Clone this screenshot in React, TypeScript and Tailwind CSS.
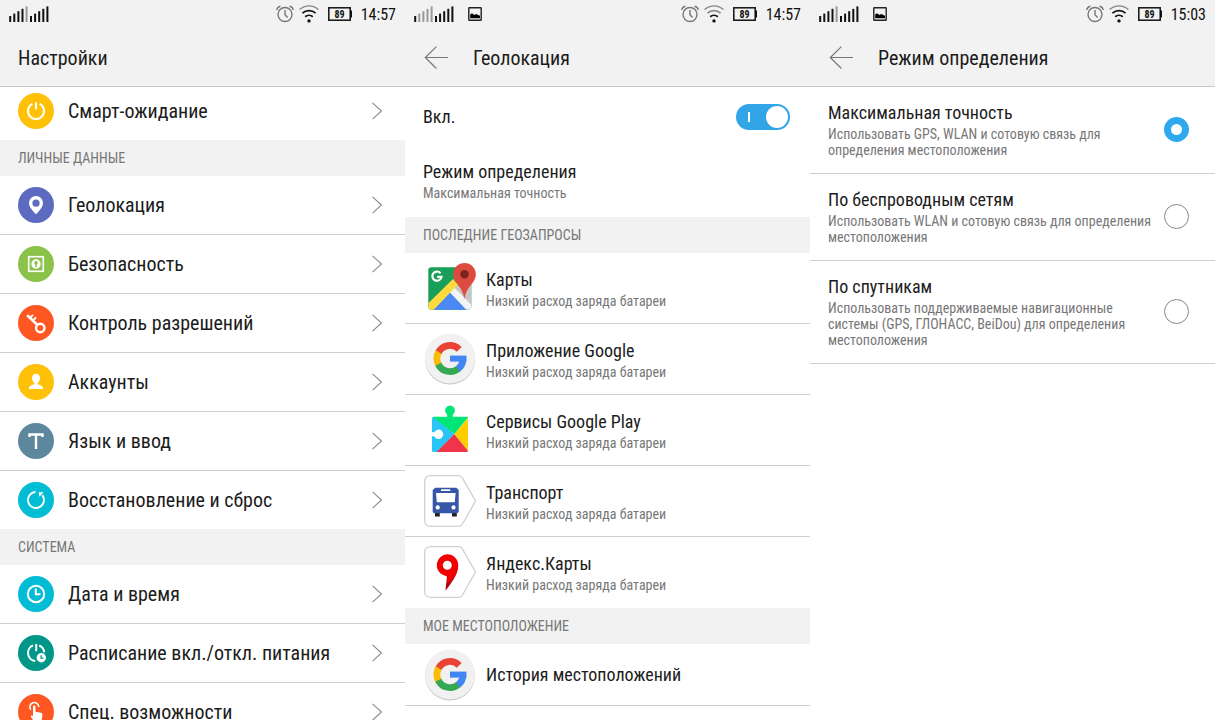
import type { ReactNode } from 'react';

type Signal = 'full' | 'weak';

const SIGNAL_BARS: Record<Signal, string[]> = {
  full: ['#111', '#111', '#111', '#111', '#999', '#111', '#111', '#111', '#111', '#111'],
  weak: ['#111', '#999', '#999', '#999', '#999', '#111', '#111', '#111', '#111', '#111'],
};

function StatusBar({ time, signal = 'full', picture = false }: { time: string; signal?: Signal; picture?: boolean }) {
  return (
    <div className="flex h-[30px] items-center justify-between px-[9px]">
      <div className="flex items-center gap-[14px] pb-0.5">
        <svg width="40" height="16" viewBox="0 0 40 16" aria-hidden>
          {SIGNAL_BARS[signal].map((fill, i) => {
            const step = i % 5;
            const h = 6 + step * 2.4;
            const x = (i < 5 ? 0.2 : 21) + step * 4.1;
            return <rect key={i} x={x} y={16 - h} width="2" height={h} fill={fill} />;
          })}
        </svg>
        {picture && (
          <svg width="14" height="14" viewBox="0 0 14 14" aria-hidden>
            <rect x="0.8" y="0.8" width="12.4" height="12.4" rx="0.5" fill="none" stroke="#222" strokeWidth="1.4" />
            <path d="M2.2 11.2V7.6l1.8-1.4 2.4 1.9 1.8-1 3.8 1.7v2.4z" fill="#000" />
          </svg>
        )}
      </div>
      <div className="flex items-center">
        <div className="flex items-center pb-0.5">
          <svg width="18" height="18" viewBox="0 0 18 18" fill="none" stroke="#777" strokeWidth="1.4" aria-hidden>
            <circle cx="9" cy="9.5" r="7" />
            <path d="M9 5v4.8l2.6 2.6M.8 5C1 3.200 2.400 1.600 4.400 1.200M17.200 5c-.2-1.800-1.600-3.400-3.600-3.800" />
          </svg>
          <svg className="ml-[5px]" width="20" height="18" viewBox="0 0 20 18" fill="none" aria-hidden>
            <path d="M.6 4.600a13.600 13.600 0 0 1 18.800 0" stroke="#888" strokeWidth="1.4" />
            <path d="M3.400 8.200a9.800 9.800 0 0 1 13.200 0" stroke={signal === 'weak' ? '#888' : '#111'} strokeWidth="1.8" />
            <path d="M6.200 11.800a5.800 5.800 0 0 1 7.600 0" stroke="#111" strokeWidth="1.8" />
            <circle cx="10" cy="15.900" r="1.7" fill="#111" />
          </svg>
          <svg className="ml-[9px]" width="24" height="14" viewBox="0 0 24 14" aria-hidden>
            <rect x="0.8" y="0.8" width="21.400" height="12.400" fill="none" stroke="#111" strokeWidth="1.5" />
            <path d="M22 3.500h2v7h-2z" fill="#111" />
            <text x="11.500" y="10.800" textAnchor="middle" className="text-[10px] font-bold" fill="#111">
              89
            </text>
          </svg>
        </div>
        <span className="ml-[9px] text-[16px] leading-none text-[#111]">{time}</span>
      </div>
    </div>
  );
}

function TopBar({ title, back = false, ...status }: { title: string; back?: boolean; time: string; signal?: Signal; picture?: boolean }) {
  return (
    <header className="border-b border-[#c8c8c8] bg-[#f2f2f2]">
      <StatusBar {...status} />
      <div className="flex h-[56px] items-center gap-[22px] px-[18px]">
        {back && (
          <button type="button" aria-label="Назад" className="w-7">
            <svg width="28" height="24" viewBox="0 0 28 24" fill="none" stroke="#777" strokeWidth="1.2" aria-hidden>
              <path d="M25 11.500H2.300M13.400.6 2.300 11.500l11.100 11" />
            </svg>
          </button>
        )}
        <h1 className="text-[20px] leading-6 text-[#1c1c1c]">{title}</h1>
      </div>
    </header>
  );
}

function SectionTitle({ children }: { children: ReactNode }) {
  return <h2 className="flex h-9 items-center bg-[#f2f2f2] px-[18px] text-[14px] text-[#777]">{children}</h2>;
}

function MenuRow({ icon, color, label }: { icon: ReactNode; color: string; label: string }) {
  return (
    <a href="#" className="flex h-[58px] w-full items-center pr-[22px] pl-[18px]">
      <svg width="36" height="36" viewBox="0 0 36 36" fill="none" stroke="#fff" strokeWidth="2" className="shrink-0" aria-hidden>
        <circle cx="18" cy="18" r="18" fill={color} stroke="none" />
        {icon}
      </svg>
      <span className="ml-[14px] flex-1 text-[20px] leading-6 text-[#1c1c1c]">{label}</span>
      <svg width="12" height="18" viewBox="0 0 12 18" fill="none" stroke="#888" strokeWidth="1.1" aria-hidden>
        <path d="M1.500.8 10.500 9l-9 8.200" />
      </svg>
    </a>
  );
}

const PERSONAL = [
  {
    label: 'Геолокация',
    color: '#5c6bc0',
    icon: <path d="M18 9a7 7 0 0 0-7 7c0 5 7 11.400 7 11.400S25 21 25 16a7 7 0 0 0-7-7zm0 3.600a3.600 3.600 0 1 1 0 7.200 3.600 3.600 0 0 1 0-7.200z" fill="#fff" stroke="none" />,
  },
  {
    label: 'Безопасность',
    color: '#8bc34a',
    icon: (
      <>
        <rect x="10.700" y="10.700" width="14.600" height="14.600" strokeWidth="1.6" />
        <circle cx="18" cy="18" r="4.700" fill="#fff" stroke="none" />
        <path d="M18 15a1.800 1.800 0 0 0-.8 3.400V21h1.600v-2.600A1.800 1.800 0 0 0 18 15z" fill="#8bc34a" stroke="none" />
      </>
    ),
  },
  {
    label: 'Контроль разрешений',
    color: '#ff5722',
    icon: (
      <>
        <circle cx="22.300" cy="23" r="4.200" strokeWidth="2.4" />
        <path d="M19.200 19.800 9.200 10.200" strokeWidth="2.6" />
        <path d="m12 12.900 3-3M14.800 15.600l3.200-3.200" strokeWidth="2" />
      </>
    ),
  },
  {
    label: 'Аккаунты',
    color: '#ffc107',
    icon: <path d="M18 9.800c-2.500 0-4 1.800-4 4.200 0 2 .8 3.800 2.200 4.700v1.500c-1.900.7-5.200 1.500-5.200 4V25h14v-.8c0-2.500-3.300-3.300-5.200-4v-1.500c1.400-.9 2.200-2.700 2.200-4.700 0-2.400-1.500-4.200-4-4.200z" fill="#fff" stroke="none" />,
  },
  {
    label: 'Язык и ввод',
    color: '#5c879c',
    icon: <path d="M11.500 14v-2.500h13V14M18 11.500v14.500" strokeWidth="2.400" />,
  },
  {
    label: 'Восстановление и сброс',
    color: '#00bcd4',
    icon: (
      <>
        <path d="M17.500 10a8 8 0 1 0 6.800 3.100" strokeWidth="1.8" />
        <path d="M20.600 10.200h5l-4.200 4.500z" fill="#fff" stroke="none" />
      </>
    ),
  },
];

const SYSTEM = [
  {
    label: 'Дата и время',
    color: '#00bcd4',
    icon: (
      <>
        <circle cx="18" cy="18" r="8.200" />
        <path d="M17.800 12.500v5.700h4.600" />
      </>
    ),
  },
  {
    label: 'Расписание вкл./откл. питания',
    color: '#009688',
    icon: (
      <>
        <path d="M15 10.400a8.200 8.200 0 0 0 2.300 15.700M21.200 10.500a8.200 8.200 0 0 1 5 6.800" />
        <path d="M18.200 9v7.200" />
        <circle cx="23.300" cy="22.800" r="4.700" fill="#fff" stroke="none" />
        <path d="M23.100 20.300v2.900h2.400" stroke="#009688" strokeWidth="1.300" />
      </>
    ),
  },
  {
    label: 'Спец. возможности',
    color: '#ff5722',
    icon: (
      <>
        <path d="M12.800 15.800a4.500 4.500 0 1 1 8-2.800" strokeWidth="1.600" />
        <path d="M15 12.800c0-1.700 2.500-1.700 2.500 0v5l5.400 1c1.200.3 1.600 1 1.500 2.100L23.700 26l-1 3.200h-5.800L13 22.900c-.7-1.200.8-2.200 2-.9z" fill="#fff" stroke="none" />
      </>
    ),
  },
];

function SettingsScreen() {
  return (
    <section className="min-w-0">
      <TopBar title="Настройки" time="14:57" />
      {/* first row is partly scrolled under the header */}
      <div className="flex h-[53px] items-end overflow-hidden">
        <MenuRow
          label="Смарт-ожидание"
          color="#ffc107"
          icon={
            <>
              <path d="M14.300 10.900a8 8 0 1 0 7.400 0" />
              <path d="M18 9.200v7" />
            </>
          }
        />
      </div>
      <SectionTitle>ЛИЧНЫЕ ДАННЫЕ</SectionTitle>
      <ul className="divide-y divide-[#cfcfcf]">
        {PERSONAL.map((item) => (
          <li key={item.label}>
            <MenuRow {...item} />
          </li>
        ))}
      </ul>
      <SectionTitle>СИСТЕМА</SectionTitle>
      <ul className="divide-y divide-[#cfcfcf]">
        {SYSTEM.map((item) => (
          <li key={item.label}>
            <MenuRow {...item} />
          </li>
        ))}
      </ul>
    </section>
  );
}

function AppIcon({ children }: { children: ReactNode }) {
  return (
    <svg width="53" height="52" viewBox="-1 0 53 52" fill="none" className="shrink-0" aria-hidden>
      {children}
    </svg>
  );
}

function MapsIcon() {
  return (
    <AppIcon>
      <defs>
        <clipPath id="maps-tile">
          <rect x="4.300" y="5.300" width="43" height="42.500" rx="3" />
        </clipPath>
      </defs>
      <g clipPath="url(#maps-tile)">
        <path d="M4 5h44v44H4z" fill="#1a9f5b" />
        <path d="M30 25 40 14h8v35z" fill="#c6c6c6" />
        <path d="M7.500 49 26 30.300 44 49z" fill="#4a89f3" />
        <path d="m30.300 25.500-4.400 4.900L43.500 49H48v-5.500z" fill="#f4f4f4" />
        <path d="M3 42.500 29 17l5 5.500L8.500 49H3z" fill="#fddb3f" />
      </g>
      <path d="M16.500 11.200a4.600 4.600 0 1 0 1 3.600h-4.300" stroke="#fff" strokeWidth="2.200" />
      <path d="M40.500 1A11.300 11.300 0 0 0 29.200 12.300c0 9.200 9.600 11.400 11.300 25.200 1.700-13.800 11.300-16 11.300-25.200A11.300 11.300 0 0 0 40.500 1z" fill="#dd4b3e" />
      <circle cx="40.500" cy="12.200" r="4.200" fill="#7b231e" />
    </AppIcon>
  );
}

function GoogleIcon() {
  return (
    <AppIcon>
      <circle cx="26" cy="26.500" r="25" fill="#c4c4c4" />
      <circle cx="26" cy="25.500" r="25" fill="#f1f1f1" />
      <g strokeWidth="6.800">
        <path d="M35.200 16.300a13 13 0 0 0-20.900 3.500" stroke="#ea4335" />
        <path d="M14.700 19a13 13 0 0 0 0 13" stroke="#fbbc05" />
        <path d="M14.300 31.200a13 13 0 0 0 20.100 4.300" stroke="#34a853" />
        <path d="M34 35.900a13 13 0 0 0 5-10.400" stroke="#4285f4" />
      </g>
      <path d="M26 25.600h16.400" stroke="#4285f4" strokeWidth="6" />
    </AppIcon>
  );
}

function PlayServicesIcon() {
  return (
    <AppIcon>
      <path d="M9.500 12.700 30.300 30 13 48H9.500Q8 48 8 46.500V14z" fill="#29c5f6" />
      <path d="M30.300 30 44 46.500Q44 48 42.500 48H12.600z" fill="#f0344c" />
      <path d="M44 14v32.800L30.300 30z" fill="#ffce00" />
      <path d="M8.500 12.700h14.700v-2.200a4.900 4.900 0 1 1 5.600 0v2.200h14.700l.5.800L30.300 30z" fill="#00e676" />
      <path d="M7.500 28.300h2.800a4.700 4.700 0 1 1 0 4H7.500z" fill="#fff" />
    </AppIcon>
  );
}

function YandexFrame({ children }: { children: ReactNode }) {
  return (
    <AppIcon>
      <path d="M6.600.7h27.900q2.500 0 4 2.400L51.500 26l-13 23q-1.500 2.300-4 2.300H6.600Q.7 51.300.7 45.400V6.600Q.7.7 6.600.7z" fill="#fff" stroke="#d0d0d0" strokeWidth="1.300" />
      {children}
    </AppIcon>
  );
}

function BusIcon() {
  return (
    <YandexFrame>
      <path d="M11 38h4.800v3.600H11zM28 38h4.800v3.600H28z" fill="#222" />
      <path d="M11.200 12.700h21.200l2.300 2.300v21.200q0 2-2 2h-22q-2 0-2-2V15z" fill="#3656a7" />
      <path d="M12 18h19.600l-.8 9.300h-18zM17 14.300h9.300V16H17z" fill="#fff" />
      <circle cx="13.700" cy="32.400" r="2.100" fill="#fff" />
      <circle cx="29.500" cy="32.400" r="2.100" fill="#fff" />
    </YandexFrame>
  );
}

function YandexMapsIcon() {
  return (
    <YandexFrame>
      <path d="M23.300 28 34.200 20c-.6 9-7 17.500-12.800 24.800z" fill="#b3000c" />
      <path d="M23.300 8.300a10.900 10.900 0 0 0-2.200 21.500c2.300.5 2.800 1.900 2.400 4L22.900 37C30.500 33 34.200 26 34.200 19.200A10.900 10.900 0 0 0 23.300 8.300zm0 6.400a4.500 4.500 0 1 1 0 9 4.500 4.500 0 0 1 0-9z" fill="#f20000" />
    </YandexFrame>
  );
}

const APPS = [
  { name: 'Карты', icon: <MapsIcon /> },
  { name: 'Приложение Google', icon: <GoogleIcon /> },
  { name: 'Сервисы Google Play', icon: <PlayServicesIcon /> },
  { name: 'Транспорт', icon: <BusIcon /> },
  { name: 'Яндекс.Карты', icon: <YandexMapsIcon /> },
];

function RowText({ title, note }: { title: string; note: string }) {
  return (
    <span className="flex flex-col">
      <span className="text-[18px] leading-[22px] text-[#1c1c1c]">{title}</span>
      <span className="text-[14px] leading-5 text-[#777]">{note}</span>
    </span>
  );
}

function LocationScreen() {
  return (
    <section className="min-w-0">
      <TopBar title="Геолокация" time="14:57" signal="weak" picture back />
      <label className="flex h-[59px] items-center justify-between pr-5 pl-[18px]">
        <span className="text-[18px] text-[#1c1c1c]">Вкл.</span>
        <span className="relative flex">
          <input
            type="checkbox"
            role="switch"
            defaultChecked
            className="peer h-[26px] w-[54px] appearance-none rounded-full bg-[#bbb] checked:bg-[#32a5e7]"
          />
          <span className="pointer-events-none absolute top-2 left-3 h-[10px] w-0.5 bg-white" />
          <span className="pointer-events-none absolute top-0.5 left-0.5 size-[22px] rounded-full bg-white peer-checked:left-[30px]" />
        </span>
      </label>
      <a href="#" className="flex h-[71px] items-center px-[18px]">
        <RowText title="Режим определения" note="Максимальная точность" />
      </a>
      <SectionTitle>ПОСЛЕДНИЕ ГЕОЗАПРОСЫ</SectionTitle>
      <ul>
        {APPS.map(({ name, icon }) => (
          <li key={name} className="border-b border-[#cfcfcf] last:border-transparent">
            <a href="#" className="flex h-[70px] items-center gap-[10px] px-[18px]">
              {icon}
              <span className="pt-1">
                <RowText title={name} note="Низкий расход заряда батареи" />
              </span>
            </a>
          </li>
        ))}
      </ul>
      <SectionTitle>МОЕ МЕСТОПОЛОЖЕНИЕ</SectionTitle>
      <a href="#" className="flex h-[62px] items-center gap-[10px] border-b border-[#cfcfcf] px-[18px]">
        <GoogleIcon />
        <span className="text-[18px] text-[#1c1c1c]">История местоположений</span>
      </a>
    </section>
  );
}

const MODES = [
  { title: 'Максимальная точность', note: 'Использовать GPS, WLAN и сотовую связь для определения местоположения' },
  { title: 'По беспроводным сетям', note: 'Использовать WLAN и сотовую связь для определения местоположения' },
  {
    title: 'По спутникам',
    note: 'Использовать поддерживаемые навигационные системы (GPS, ГЛОНАСС, BeiDou) для определения местоположения',
  },
];

function ModeScreen() {
  return (
    <section className="min-w-0">
      <TopBar title="Режим определения" time="15:03" picture back />
      {MODES.map(({ title, note }, i) => (
        <label key={title} className="flex items-center gap-2 border-b border-[#cfcfcf] pt-[13px] pr-[26px] pb-[15px] pl-[18px]">
          <span className="flex flex-1 flex-col">
            <span className="text-[18px] leading-[26px] text-[#1c1c1c]">{title}</span>
            <span className="text-[14px] leading-4 text-[#777]">{note}</span>
          </span>
          <input
            type="radio"
            name="mode"
            defaultChecked={i === 0}
            className="size-[25px] shrink-0 appearance-none rounded-full border border-[#888] bg-white checked:border-[7px] checked:border-[#2fa8f0]"
          />
        </label>
      ))}
    </section>
  );
}

export default function App() {
  return (
    <main className="grid h-screen grid-cols-3 overflow-hidden bg-white font-['Roboto_Condensed',Roboto,sans-serif]">
      <SettingsScreen />
      <LocationScreen />
      <ModeScreen />
    </main>
  );
}
